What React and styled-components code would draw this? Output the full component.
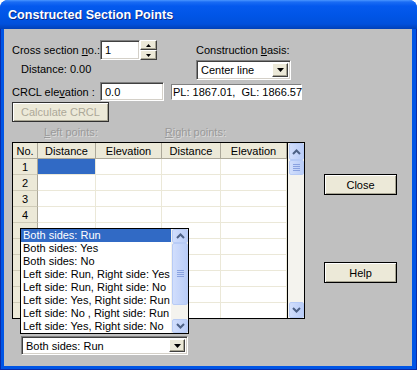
import React from 'react';
import styled, { createGlobalStyle, css } from 'styled-components';

const GlobalStyle = createGlobalStyle`
  html, body {
    margin: 0;
    padding: 0;
    background: #ffffff;
  }
  * {
    box-sizing: border-box;
  }
  body {
    font-family: "Liberation Sans", Arial, sans-serif;
    font-size: 11px;
    color: #000;
  }
`;

const raised = css`
  border: 1px solid;
  border-color: #ffffff #404040 #404040 #ffffff;
  box-shadow: inset -1px -1px #a8a593;
  background: #ece9d8;
`;

const sunken = css`
  border: 1px solid;
  border-color: #808080 #ffffff #ffffff #808080;
  box-shadow: inset 1px 1px #404040, inset -1px -1px #d4d0c8;
  background: #ffffff;
`;

const Window = styled.div`
  width: 417px;
  height: 370px;
  display: flex;
  flex-direction: column;
  background: #0054e3;
  border-radius: 8px 8px 0 0;
  overflow: hidden;
`;

const TitleBar = styled.div`
  height: 29px;
  flex: none;
  display: flex;
  align-items: center;
  padding: 1px 0 0 8px;
  background: linear-gradient(#4a96ff 0, #1a6cf4 2px, #0459ee 6px, #0055e6 16px, #0050dc 24px, #0040b8 29px);
  color: #ffffff;
  font: bold 12.6px "Liberation Sans", Arial, sans-serif;
  text-shadow: 1px 1px #0b2a8a;
`;

const Frame = styled.div`
  flex: 1;
  display: flex;
  padding: 0 5px 4px 4px;
  background: #0055e5;
  box-shadow: inset 1px 0 #0a2aa8, inset -1px 0 #0a2aa8, inset 0 -1px #0a2aa8;
`;

const Body = styled.div`
  flex: 1;
  display: flex;
  background: #c0c0c0;
  padding: 11px 0 0 8px;
`;

const LeftPane = styled.div`
  width: 293px;
  display: flex;
  flex-direction: column;
`;

const RightPane = styled.div`
  display: flex;
  flex-direction: column;
  margin-left: 19px;
  padding-top: 134px;
  gap: 67px;
`;

const TopRow = styled.div`
  display: flex;
  height: 42px;
`;

const FormCol = styled.div`
  width: 184px;
  display: flex;
  flex-direction: column;
`;

const BasisCol = styled.div`
  display: flex;
  flex-direction: column;
  padding-top: 3px;
  gap: 3px;
`;

const FieldRow = styled.div`
  display: flex;
  align-items: center;
  height: ${p => p.$h || 20}px;
`;

const Label = styled.span`
  width: ${p => (p.$w ? `${p.$w}px` : 'auto')};
  line-height: 14px;
  white-space: nowrap;
  color: ${p => (p.$disabled ? '#9a9a9a' : '#000')};
  text-shadow: ${p => (p.$disabled ? '1px 1px #dcdcdc' : 'none')};
`;

const Note = styled.div`
  margin: 2px 0 0 9px;
  line-height: 14px;
`;

const Field = styled.div`
  ${sunken};
  width: ${p => p.$w}px;
  height: ${p => p.$h || 20}px;
  display: flex;
  align-items: center;
  padding: 0 4px;
`;

const InfoBox = styled.div`
  width: 131px;
  height: 16px;
  margin-left: 7px;
  background: #ffffff;
  border: 1px solid;
  border-color: #808080 #ffffff #ffffff #808080;
  display: flex;
  align-items: center;
  padding-left: 1px;
  white-space: pre;
`;

const Spinner = styled.div`
  width: 17px;
  height: 20px;
  display: flex;
  flex-direction: column;
`;

const SpinBtn = styled.div`
  ${raised};
  flex: 1;
  display: flex;
  align-items: center;
  justify-content: center;
`;

const Combo = styled.div`
  ${sunken};
  width: ${p => p.$w}px;
  height: ${p => p.$h}px;
  display: flex;
  align-items: center;
  padding: 2px 2px 2px 4px;
`;

const ComboText = styled.span`
  flex: 1;
  white-space: nowrap;
`;

const DropBtn = styled.div`
  ${raised};
  width: 16px;
  height: 100%;
  display: flex;
  align-items: center;
  justify-content: center;
`;

const DisabledButton = styled.div`
  width: 97px;
  height: 20px;
  margin-top: 1px;
  border: 1px solid #303030;
  box-shadow: inset 1px 1px #ffffff, inset -1px -1px #a8a593;
  background: #ece9d8;
  color: #aca899;
  display: flex;
  align-items: center;
  justify-content: center;
`;

const Captions = styled.div`
  height: 20px;
  display: flex;
  padding: 3px 0 0 32px;
  gap: 67px;
`;

const Grid = styled.div`
  height: 177px;
  border: 1px solid #000;
  background: #ffffff;
  display: flex;
  overflow: hidden;
`;

const Cells = styled.div`
  width: 275px;
  border-right: 1px solid #000;
  display: grid;
  grid-template-columns: 25px 58px 66px 59px 66px;
  grid-auto-rows: 16px;
  align-content: start;
`;

const HeadCell = styled.div`
  background: #ece9d8;
  border-right: 1px solid #aca899;
  border-bottom: 1px solid #aca899;
  display: flex;
  align-items: center;
  justify-content: center;
`;

const NumCell = styled.div`
  background: #ece9d8;
  border-right: 1px solid #aca899;
  border-bottom: 1px solid #cfcbb8;
  display: flex;
  align-items: center;
  justify-content: center;
`;

const DataCell = styled.div`
  background: ${p => (p.$selected ? '#316ac5' : '#ffffff')};
  border-right: 1px solid #ebe8d8;
  border-bottom: 1px solid #ebe8d8;
`;

const VScroll = styled.div`
  width: ${p => p.$w || 16}px;
  flex: none;
  display: flex;
  flex-direction: column;
  background: #f4f3ee;
  padding: 0 0 0 1px;
`;

const ScrollBtn = styled.div`
  height: ${p => p.$h || 16}px;
  flex: none;
  border: 1px solid #b7cbf6;
  border-radius: 2px;
  background: linear-gradient(to right, #d1defc, #bacdf8);
  display: flex;
  align-items: center;
  justify-content: center;
`;

const Track = styled.div`
  flex: 1;
`;

const ComboWrap = styled.div`
  position: relative;
  margin: 17px 0 0 9px;
  width: 167px;
`;

const DropList = styled.div`
  position: absolute;
  left: -1px;
  bottom: calc(100% + 2px);
  width: 169px;
  height: 106px;
  border: 1px solid #000;
  background: #ffffff;
  display: flex;
  z-index: 2;
`;

const Options = styled.div`
  flex: 1;
  min-width: 0;
  overflow: hidden;
  display: flex;
  flex-direction: column;
`;

const Option = styled.div`
  height: 13px;
  line-height: 13px;
  padding-left: 2px;
  white-space: nowrap;
  background: ${p => (p.$active ? '#316ac5' : 'transparent')};
  color: ${p => (p.$active ? '#ffffff' : '#000')};
`;

const PushButton = styled.div`
  width: 73px;
  height: 21px;
  border: 1px solid #000;
  box-shadow: inset 1px 1px #ffffff, inset -1px -1px #a8a593;
  background: #ece9d8;
  display: flex;
  align-items: center;
  justify-content: center;
`;

const Triangle = ({ down = true, size = 7 }) => (
  <svg width={size} height={Math.ceil(size / 2)} viewBox="0 0 7 4">
    <path d={down ? 'M0 0h7L3.5 4z' : 'M0 4h7L3.5 0z'} fill="#000" />
  </svg>
);

const Chevron = ({ up }) => (
  <svg width="9" height="6" viewBox="0 0 9 6">
    <path
      d={up ? 'M1 5L4.5 1.5L8 5' : 'M1 1L4.5 4.5L8 1'}
      fill="none"
      stroke="#4d6185"
      strokeWidth="2"
    />
  </svg>
);

const Grip = () => (
  <svg width="7" height="8" viewBox="0 0 7 8">
    {[0, 2, 4, 6].map(y => (
      <line key={y} x1="0" x2="7" y1={y + 0.5} y2={y + 0.5} stroke="#8aa2e0" />
    ))}
  </svg>
);

// rows under the open list keep their cells; only the visible numbers are drawn
const rows = Array.from({ length: 10 }, (_, i) => i + 1);

const options = [
  'Both sides: Run',
  'Both sides: Yes',
  'Both sides: No',
  'Left side: Run, Right side: Yes',
  'Left side: Run, Right side: No',
  'Left side: Yes, Right side: Run',
  'Left side: No , Right side: Run',
  'Left side: Yes, Right side: No',
];

const App = () => (
  <>
    <GlobalStyle />
    <Window>
      <TitleBar>Constructed Section Points</TitleBar>
      <Frame>
        <Body>
          <LeftPane>
            <TopRow>
              <FormCol>
                <FieldRow>
                  <Label $w={88}>Cross section <u>n</u>o.:</Label>
                  <Field $w={40}>1</Field>
                  <Spinner>
                    <SpinBtn><Triangle down={false} size={5} /></SpinBtn>
                    <SpinBtn><Triangle size={5} /></SpinBtn>
                  </Spinner>
                </FieldRow>
                <Note>Distance: 0.00</Note>
              </FormCol>
              <BasisCol>
                <Label>Construction <u>b</u>asis:</Label>
                <Combo $w={95} $h={20}>
                  <ComboText>Center line</ComboText>
                  <DropBtn><Triangle /></DropBtn>
                </Combo>
              </BasisCol>
            </TopRow>
            <FieldRow $h={19}>
              <Label $w={88}>CRCL ele<u>v</u>ation :</Label>
              <Field $w={64} $h={19}>0.0</Field>
              <InfoBox>PL: 1867.01,  GL: 1866.57</InfoBox>
            </FieldRow>
            <DisabledButton>Calculate CRCL</DisabledButton>
            <Captions>
              <Label $disabled><u>L</u>eft points:</Label>
              <Label $disabled><u>R</u>ight points:</Label>
            </Captions>
            <Grid>
              <Cells>
                <HeadCell>No.</HeadCell>
                <HeadCell>Distance</HeadCell>
                <HeadCell>Elevation</HeadCell>
                <HeadCell>Distance</HeadCell>
                <HeadCell>Elevation</HeadCell>
                {rows.map(n => (
                  <React.Fragment key={n}>
                    <NumCell>{n <= 4 ? n : ''}</NumCell>
                    <DataCell $selected={n === 1} />
                    <DataCell />
                    <DataCell />
                    <DataCell />
                  </React.Fragment>
                ))}
              </Cells>
              <VScroll>
                <ScrollBtn $h={17}><Chevron up /></ScrollBtn>
                <ScrollBtn $h={15}><Grip /></ScrollBtn>
                <Track />
                <ScrollBtn $h={16}><Chevron /></ScrollBtn>
              </VScroll>
            </Grid>
            <ComboWrap>
              <DropList>
                <Options>
                  {options.map((o, i) => (
                    <Option key={o} $active={i === 0}>{o}</Option>
                  ))}
                </Options>
                <VScroll $w={17}>
                  <ScrollBtn $h={14}><Chevron up /></ScrollBtn>
                  <ScrollBtn $h={62}><Grip /></ScrollBtn>
                  <Track />
                  <ScrollBtn $h={14}><Chevron /></ScrollBtn>
                </VScroll>
              </DropList>
              <Combo $w={167} $h={19}>
                <ComboText>Both sides: Run</ComboText>
                <DropBtn><Triangle /></DropBtn>
              </Combo>
            </ComboWrap>
          </LeftPane>
          <RightPane>
            <PushButton>Close</PushButton>
            <PushButton>Help</PushButton>
          </RightPane>
        </Body>
      </Frame>
    </Window>
  </>
);

export default App;
